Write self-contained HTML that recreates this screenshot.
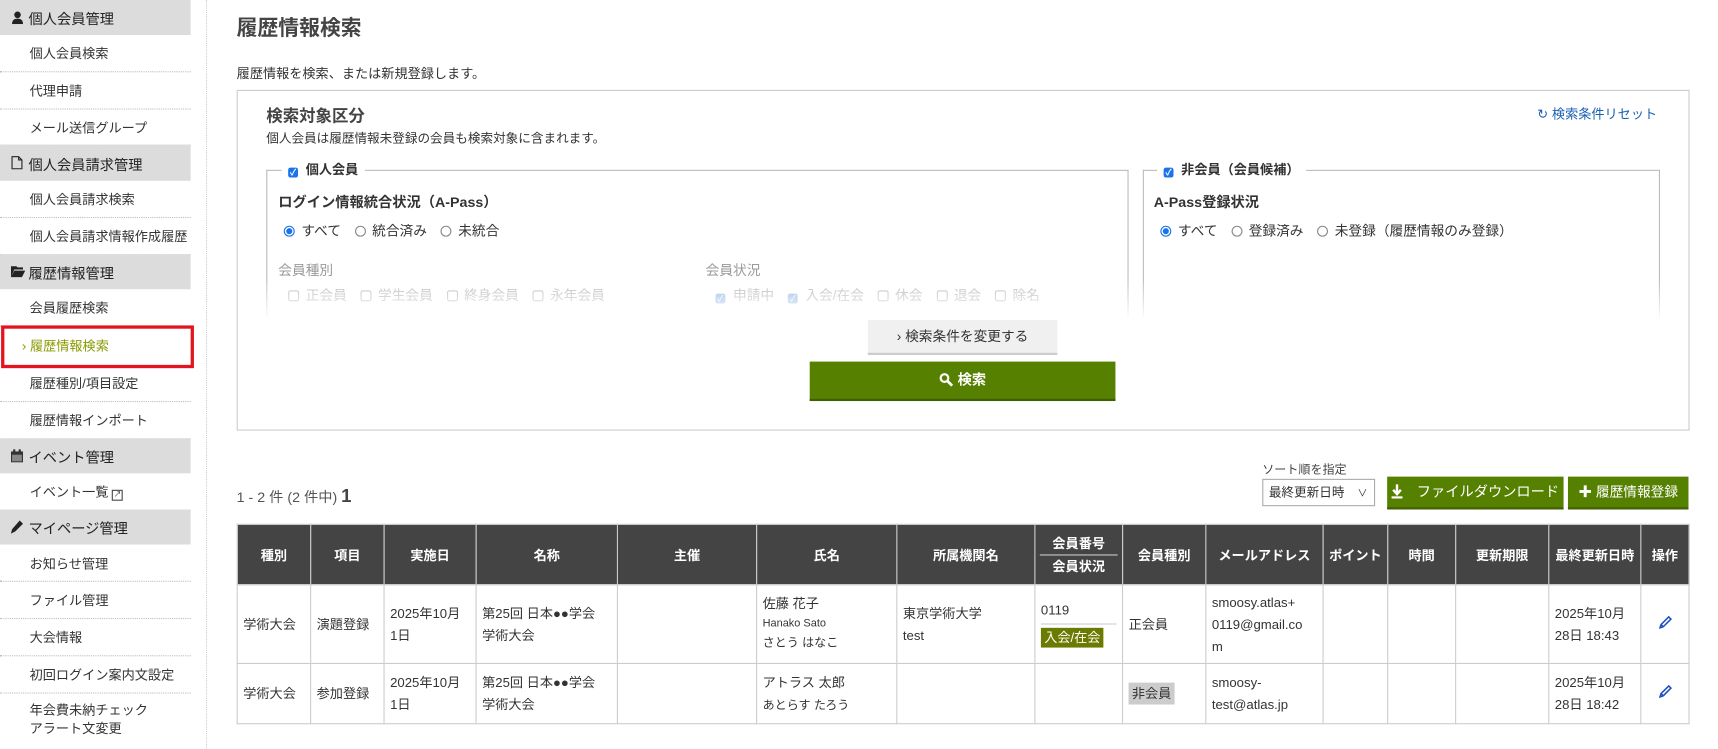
<!DOCTYPE html>
<html><head><meta charset="utf-8">
<style>
html,body{margin:0;padding:0;background:#fff;width:1718px;height:749px;overflow:hidden}
#c{position:absolute;left:0;top:0;width:1568px;height:684px;transform:scale(1.0957);transform-origin:0 0;font-family:"Liberation Sans","Noto Sans CJK JP",sans-serif;font-size:12px;color:#333}
.a{position:absolute;white-space:nowrap}
.sb{position:absolute;left:0;top:0;width:174px;height:684px}
.h{position:absolute;left:0;width:174px;background:#dcdcdc;font-size:13px;color:#222}
.h span{position:absolute;left:26px}
.h svg{position:absolute;left:10px}
.it{position:absolute;left:0;width:174px;border-bottom:1px dotted #bbb;font-size:12px;color:#333}
.it span{position:absolute;left:27px}
.rad{display:inline-block;width:8px;height:8px;border:1px solid #888;border-radius:50%;vertical-align:-1px;margin-right:6px;background:#fff}
.rad.on{border-color:#1a73e8;background:radial-gradient(circle,#1a73e8 0 2.5px,#fff 3px)}
.cb{display:inline-block;width:8px;height:8px;border:1px solid #bbb;border-radius:2px;vertical-align:-1px;margin-right:6px}
.cbon{display:inline-block;width:9px;height:9px;background:#1a73e8;border-radius:2px;vertical-align:-1px;margin-right:7px;color:#fff;font-size:8px;line-height:9px;text-align:center}
table{position:absolute;left:216px;top:478px;border-collapse:collapse;width:1326px;table-layout:fixed}
th{background:#444;color:#fff;font-weight:bold;font-size:12px;height:54px;border:1px solid #ccc;padding:0;text-align:center}
td{border:1px solid #ccc;font-size:12px;padding:0 5px;line-height:20px;vertical-align:middle;color:#333}
</style></head><body><div id="c">
<div class="sb">
<div class="h" style="top:0;height:32px"><svg style="top:10px" width="12" height="12" viewBox="0 0 12 12"><circle cx="6" cy="3.5" r="3" fill="#222"/><path d="M1 12 Q1 7 6 7 Q11 7 11 12Z" fill="#222"/></svg><span style="top:7px">個人会員管理</span></div>
<div class="it" style="top:32px;height:33px"><span style="top:8px">個人会員検索</span></div>
<div class="it" style="top:66px;height:33px"><span style="top:8px">代理申請</span></div>
<div class="it" style="top:100px;height:32px"><span style="top:8px">メール送信グループ</span></div>
<div class="h" style="top:132px;height:33px"><svg style="top:10px" width="11" height="13" viewBox="0 0 11 13"><path d="M1 1H7L10 4V12H1Z M7 1V4H10" fill="none" stroke="#222"/></svg><span style="top:8px">個人会員請求管理</span></div>
<div class="it" style="top:165px;height:33px"><span style="top:8px">個人会員請求検索</span></div>
<div class="it" style="top:199px;height:33px"><span style="top:8px">個人会員請求情報作成履歴</span></div>
<div class="h" style="top:232px;height:32px"><svg style="top:10px" width="13" height="11" viewBox="0 0 13 11"><path d="M0 1H5L6 2H11V4H3L0 11Z M3 5H13L10 11H0Z" fill="#222"/></svg><span style="top:7px">履歴情報管理</span></div>
<div class="it" style="top:264px;height:33px"><span style="top:8px">会員履歴検索</span></div>
<div style="position:absolute;left:1px;top:297px;width:170px;height:33px;border:3px solid #e3141e"><span style="position:absolute;left:16px;top:7px;color:#8a9a00">› 履歴情報検索</span></div>
<div class="it" style="top:333px;height:33px"><span style="top:8px">履歴種別/項目設定</span></div>
<div class="it" style="top:367px;height:33px"><span style="top:8px">履歴情報インポート</span></div>
<div class="h" style="top:400px;height:32px"><svg style="top:10px" width="11" height="12" viewBox="0 0 11 12"><rect x="0" y="2" width="11" height="10" fill="#333"/><rect x="1" y="5" width="9" height="6" fill="#888"/><rect x="2" y="0" width="2" height="3" fill="#333"/><rect x="7" y="0" width="2" height="3" fill="#333"/></svg><span style="top:7px">イベント管理</span></div>
<div class="it" style="top:432px;height:33px"><span style="top:8px">イベント一覧 <span style="position:static;display:inline-block;width:8px;height:8px;border:1px solid #444;font-size:7px;line-height:8px;text-align:center;vertical-align:0">↗</span></span></div>
<div class="h" style="top:465px;height:32px"><svg style="top:10px" width="11" height="12" viewBox="0 0 11 12"><path d="M8 0L11 3L4 10L0 12L1 8Z" fill="#222"/></svg><span style="top:7px">マイページ管理</span></div>
<div class="it" style="top:497px;height:33px"><span style="top:9px">お知らせ管理</span></div>
<div class="it" style="top:531px;height:33px"><span style="top:8px">ファイル管理</span></div>
<div class="it" style="top:565px;height:33px"><span style="top:8px">大会情報</span></div>
<div class="it" style="top:599px;height:33px"><span style="top:8px">初回ログイン案内文設定</span></div>
<div class="a" style="left:27px;top:640px;line-height:17px">年会費未納チェック<br>アラート文変更</div>
</div>
<div style="position:absolute;left:188px;top:0;height:684px;border-left:1px dotted #ccc"></div>

<div class="a" style="left:216px;top:11px;font-size:19px;font-weight:bold;color:#444">履歴情報検索</div>
<div class="a" style="left:216px;top:58px;font-size:12px">履歴情報を検索、または新規登録します。</div>

<div style="position:absolute;left:216px;top:82px;width:1324px;height:309px;border:1px solid #ccc"></div>
<div class="a" style="left:243px;top:95px;font-size:15px;font-weight:bold;color:#444">検索対象区分</div>
<div class="a" style="left:243px;top:118px;font-size:11.5px">個人会員は履歴情報未登録の会員も検索対象に含まれます。</div>
<div class="a" style="left:1403px;top:95px;font-size:12px;color:#1a5fb4">↻ 検索条件リセット</div>

<div style="position:absolute;left:243px;top:155px;width:785px;height:135px;border:1px solid #bbb;border-bottom:none"></div>
<div class="a" style="left:257px;top:146px;background:#fff;padding:0 6px;font-size:12px;font-weight:bold"><span class="cbon">✓</span>個人会員</div>
<div class="a" style="left:254px;top:174px;font-size:13px;font-weight:bold">ログイン情報統合状況（A-Pass）</div>
<div class="a" style="left:259px;top:200px;font-size:12.5px"><span class="rad on"></span>すべて　<span class="rad"></span>統合済み　<span class="rad"></span>未統合</div>
<div class="a" style="left:254px;top:236px;font-size:12.5px;color:#999">会員種別</div>
<div class="a" style="left:263px;top:259px;font-size:12.5px;color:#bbb"><span class="cb"></span>正会員　<span class="cb"></span>学生会員　<span class="cb"></span>終身会員　<span class="cb"></span>永年会員</div>
<div class="a" style="left:644px;top:236px;font-size:12.5px;color:#999">会員状況</div>
<div class="a" style="left:653px;top:259px;font-size:12.5px;color:#bbb"><span class="cbon" style="background:#9bbfe8">✓</span>申請中　<span class="cbon" style="background:#9bbfe8">✓</span>入会/在会　<span class="cb"></span>休会　<span class="cb"></span>退会　<span class="cb"></span>除名</div>

<div style="position:absolute;left:1043px;top:155px;width:470px;height:135px;border:1px solid #bbb;border-bottom:none"></div>
<div class="a" style="left:1056px;top:146px;background:#fff;padding:0 6px;font-size:12px;font-weight:bold"><span class="cbon">✓</span>非会員（会員候補）</div>
<div class="a" style="left:1053px;top:174px;font-size:13px;font-weight:bold">A-Pass登録状況</div>
<div class="a" style="left:1059px;top:200px;font-size:12.5px"><span class="rad on"></span>すべて　<span class="rad"></span>登録済み　<span class="rad"></span>未登録（履歴情報のみ登録）</div>
<div style="position:absolute;left:240px;top:255px;width:1280px;height:37px;background:linear-gradient(rgba(255,255,255,0),#fff)"></div>

<div class="a" style="left:792px;top:292px;width:173px;height:30px;background:#f0f0f0;border-bottom:2px solid #ccc;text-align:center;line-height:30px;font-size:12.5px">› 検索条件を変更する</div>
<div class="a" style="left:739px;top:330px;width:279px;height:34px;background:#558000;border-bottom:2px solid #3f6000;color:#fff;text-align:center;line-height:34px;font-size:13px;font-weight:bold"><svg width="13" height="13" viewBox="0 0 13 13" style="vertical-align:-2px;margin-right:4px"><circle cx="5" cy="5" r="3.5" fill="none" stroke="#fff" stroke-width="2"/><path d="M7.5 7.5L12 12" stroke="#fff" stroke-width="2.5"/></svg>検索</div>

<div class="a" style="left:216px;top:443px;font-size:13px;color:#555">1 - 2 件 (2 件中) <b style="font-size:17px;color:#444">1</b></div>
<div class="a" style="left:1152px;top:420px;font-size:11px;color:#444">ソート順を指定</div>
<div class="a" style="left:1152px;top:437px;height:25px;border:1px solid #aaa;line-height:25px;font-size:11.5px;padding-left:5px;box-sizing:border-box;width:103px">最終更新日時 <span style="position:absolute;right:6px;font-size:9px">∨</span></div>
<div class="a" style="left:1266px;top:435px;width:161px;height:28px;background:#558000;border-bottom:2px solid #3f6000;color:#fff;line-height:28px;text-align:center;font-size:13px"><svg width="10" height="13" viewBox="0 0 10 13" style="vertical-align:-2px"><path d="M5 0V8M1.5 5L5 9L8.5 5" stroke="#fff" stroke-width="2.2" fill="none"/><rect x="0" y="11" width="10" height="2" fill="#fff"/></svg>　ファイルダウンロード</div>
<div class="a" style="left:1431px;top:435px;width:110px;height:28px;background:#558000;border-bottom:2px solid #3f6000;color:#fff;line-height:28px;text-align:center;font-size:12.5px"><b>✚</b> 履歴情報登録</div>

<table>
<colgroup><col style="width:67px"><col style="width:67px"><col style="width:84px"><col style="width:129px"><col style="width:127px"><col style="width:128px"><col style="width:126px"><col style="width:80px"><col style="width:76px"><col style="width:107px"><col style="width:59px"><col style="width:62px"><col style="width:85px"><col style="width:84px"><col style="width:44px"></colgroup>
<tr><th>種別</th><th>項目</th><th>実施日</th><th>名称</th><th>主催</th><th>氏名</th><th>所属機関名</th><th style="line-height:20px"><div style="border-bottom:1px solid #ccc;margin:0 4px">会員番号</div>会員状況</th><th>会員種別</th><th>メールアドレス</th><th>ポイント</th><th>時間</th><th>更新期限</th><th>最終更新日時</th><th>操作</th></tr>
<tr style="height:72px"><td>学術大会</td><td>演題登録</td><td>2025年10月<br>1日</td><td>第25回 日本●●学会<br>学術大会</td><td></td><td style="line-height:17px">佐藤 花子<br><span style="font-size:10px">Hanako Sato</span><br><span style="font-size:11px">さとう はなこ</span></td><td>東京学術大学<br>test</td><td><div style="border-bottom:1px solid #ccc;padding-bottom:2px">0119</div><span style="display:inline-block;background:#6b7a00;color:#fff;padding:0 3px;margin-top:3px;line-height:18px">入会/在会</span></td><td>正会員</td><td>smoosy.atlas+<br>0119@gmail.co<br>m</td><td></td><td></td><td></td><td>2025年10月<br>28日 18:43</td><td style="text-align:center"><svg width="12" height="12" viewBox="0 0 12 12"><path d="M9 1L11 3L4 10L1 11L2 8Z M2 8L4 10" fill="none" stroke="#1a4fc4" stroke-width="1.4"/></svg></td></tr>
<tr style="height:55px"><td>学術大会</td><td>参加登録</td><td>2025年10月<br>1日</td><td>第25回 日本●●学会<br>学術大会</td><td></td><td>アトラス 太郎<br><span style="font-size:11px">あとらす たろう</span></td><td></td><td></td><td><span style="display:inline-block;background:#ccc;padding:0 3px;line-height:20px">非会員</span></td><td>smoosy-<br>test@atlas.jp</td><td></td><td></td><td></td><td>2025年10月<br>28日 18:42</td><td style="text-align:center"><svg width="12" height="12" viewBox="0 0 12 12"><path d="M9 1L11 3L4 10L1 11L2 8Z M2 8L4 10" fill="none" stroke="#1a4fc4" stroke-width="1.4"/></svg></td></tr>
</table>
</div></body></html>
